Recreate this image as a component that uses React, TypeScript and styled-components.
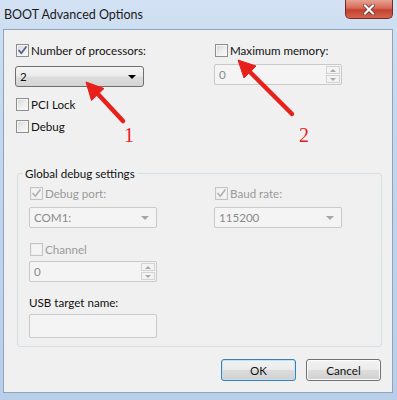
import React from "react";
import styled, { createGlobalStyle, css } from "styled-components";

const GlobalStyle = createGlobalStyle`
  html, body { margin: 0; padding: 0; }
  body { font-family: Lato, "Noto Sans", "DejaVu Sans", sans-serif; font-size: 11.6px; }
  * { box-sizing: border-box; }
`;

const Window = styled.div`
  position: relative;
  width: 397px;
  height: 400px;
  display: flex;
  flex-direction: column;
  padding: 0 4px 7px 3px;
  background: linear-gradient(180deg, #d2e1f3 0%, #c3d7ee 30%, #b9cfe9 100%);
  overflow: hidden;
`;

const TitleBar = styled.div`
  height: 29px;
  display: flex;
  align-items: flex-start;
  justify-content: space-between;
  flex: none;
`;

const Title = styled.div`
  margin-top: 6px;
  margin-left: 1px;
  font-size: 12.5px;
  line-height: 17px;
  color: #1b1b1b;
`;

const CloseButton = styled.div`
  width: 48px;
  height: 19px;
  border: 1px solid #7a2a24;
  border-top: none;
  border-radius: 0 0 5px 5px;
  background: linear-gradient(180deg, #e7a291 0%, #d76a59 45%, #c5402f 55%, #d2644f 100%);
  display: flex;
  align-items: center;
  justify-content: center;
`;

const Client = styled.div`
  flex: 1;
  background: #f0f0f0;
  border: 1px solid #8ea3bd;
  padding: 13px 11px 0 11px;
  display: flex;
  flex-direction: column;
`;

const TopGrid = styled.div`
  display: grid;
  grid-template-columns: 199px 1fr;
`;

const Column = styled.div`
  display: flex;
  flex-direction: column;
  align-items: flex-start;
`;

const Row = styled.label<{ $mt?: number; $disabled?: boolean }>`
  display: flex;
  align-items: center;
  gap: 2px;
  height: 15px;
  margin-top: ${(p) => p.$mt ?? 0}px;
  margin-left: 1px;
  line-height: 15px;
  color: ${(p) => (p.$disabled ? "#9a9a9a" : "#111")};
  white-space: nowrap;
`;

const Box = styled.span<{ $disabled?: boolean }>`
  width: 13px;
  height: 13px;
  flex: none;
  border: 1px solid ${(p) => (p.$disabled ? "#c4c4c4" : "#8e8f8f")};
  background: ${(p) =>
    p.$disabled
      ? "#f4f4f4"
      : "linear-gradient(135deg, #d6d6d6 0%, #ececec 50%, #fbfbfb 100%)"};
  box-shadow: inset 0 0 0 1px ${(p) => (p.$disabled ? "#ededed" : "#f4f4f4")};
  display: flex;
  align-items: center;
  justify-content: center;
`;

const Field = styled.div<{ $mt?: number; $w: number; $h?: number; $variant: "combo" | "disabled" }>`
  width: ${(p) => p.$w}px;
  height: ${(p) => p.$h ?? 21}px;
  margin-top: ${(p) => p.$mt ?? 0}px;
  display: flex;
  align-items: center;
  justify-content: space-between;
  padding-left: 4px;
  ${(p) =>
    p.$variant === "combo"
      ? css`
          border: 1px solid #707070;
          border-radius: 3px;
          background: linear-gradient(180deg, #f4f4f4 0%, #ebebeb 48%, #dddddd 52%, #d4d4d4 100%);
          color: #111;
        `
      : css`
          border: 1px solid #c9c9c9;
          border-radius: 2px;
          background: #f4f4f4;
          color: #8a8a8a;
        `}
`;

const DropArrow = styled.span<{ $disabled?: boolean }>`
  width: 0;
  height: 0;
  margin-right: 7px;
  border-left: 4px solid transparent;
  border-right: 4px solid transparent;
  border-top: 4px solid ${(p) => (p.$disabled ? "#a5a5a5" : "#000")};
`;

const Spinner = styled.div`
  display: flex;
  flex-direction: column;
  gap: 1px;
  margin-right: 1px;
  height: 17px;
`;

const SpinBtn = styled.div<{ $up?: boolean }>`
  width: 14px;
  height: 8px;
  border: 1px solid #d3d3d3;
  background: #f3f3f3;
  display: flex;
  align-items: center;
  justify-content: center;
  &::after {
    content: "";
    border-left: 3px solid transparent;
    border-right: 3px solid transparent;
    ${(p) =>
      p.$up ? "border-bottom: 3px solid #a9a9a9;" : "border-top: 3px solid #a9a9a9;"}
  }
`;

const Group = styled.fieldset`
  width: 365px;
  margin: 32px 0 0 2px;
  padding: 0 0 8px 0;
  border: 1px solid #d5dfe5;
  border-radius: 3px;
  min-width: 0;
`;

const Legend = styled.legend`
  margin-left: 5px;
  padding: 0 2px;
  line-height: 15px;
  color: #111;
`;

const GroupGrid = styled.div`
  display: grid;
  grid-template-columns: 185px 1fr;
  padding: 5px 0 0 11px;
`;

const Label = styled.div<{ $mt?: number }>`
  margin-top: ${(p) => p.$mt ?? 0}px;
  line-height: 15px;
  color: #111;
`;

const ButtonRow = styled.div`
  display: flex;
  justify-content: flex-end;
  gap: 10px;
  margin-top: 12px;
  width: 366px;
`;

const Button = styled.div<{ $default?: boolean }>`
  width: 75px;
  height: 22px;
  border-radius: 3px;
  display: flex;
  align-items: center;
  justify-content: center;
  color: #111;
  background: linear-gradient(180deg, #f2f2f2 0%, #ebebeb 48%, #dddddd 52%, #cfcfcf 100%);
  border: 1px solid ${(p) => (p.$default ? "#3c7fb1" : "#707070")};
  box-shadow: ${(p) => (p.$default ? "inset 0 0 0 1px #bde4f7" : "inset 0 0 0 1px #fbfbfb")};
`;

const Overlay = styled.svg`
  position: absolute;
  left: 0;
  top: 0;
  pointer-events: none;
`;

const Check = ({ disabled }: { disabled?: boolean }) => (
  <svg width="11" height="11" viewBox="0 0 11 11">
    <path
      d="M2 5.5 L4.3 8.3 L9 2"
      fill="none"
      stroke={disabled ? "#b3b3b3" : "#4a5f93"}
      strokeWidth="1.7"
      strokeLinecap="round"
      strokeLinejoin="round"
    />
  </svg>
);

const CheckBox = ({ checked, disabled }: { checked?: boolean; disabled?: boolean }) => (
  <Box $disabled={disabled}>{checked && <Check disabled={disabled} />}</Box>
);

const SpinField = ({ w, value, mt }: { w: number; value: string; mt?: number }) => (
  <Field $w={w} $mt={mt} $variant="disabled">
    <span>{value}</span>
    <Spinner>
      <SpinBtn $up />
      <SpinBtn />
    </Spinner>
  </Field>
);

export default function App() {
  return (
    <Window>
      <GlobalStyle />
      <TitleBar>
        <Title>BOOT Advanced Options</Title>
        <CloseButton>
          <svg width="12" height="11" viewBox="0 0 12 11">
            <path d="M2 1.5 L10 9.5 M10 1.5 L2 9.5" stroke="#5a2a25" strokeWidth="3.6" strokeLinecap="square" />
            <path d="M2 1.5 L10 9.5 M10 1.5 L2 9.5" stroke="#ffffff" strokeWidth="2.2" strokeLinecap="square" />
          </svg>
        </CloseButton>
      </TitleBar>
      <Client>
        <TopGrid>
          <Column>
            <Row>
              <CheckBox checked />
              Number of processors:
            </Row>
            <Field $w={129} $mt={8} $variant="combo">
              <span>2</span>
              <DropArrow />
            </Field>
            <Row $mt={10}>
              <CheckBox />
              PCI Lock
            </Row>
            <Row $mt={7}>
              <CheckBox />
              Debug
            </Row>
          </Column>
          <Column>
            <Row>
              <CheckBox />
              Maximum memory:
            </Row>
            <SpinField w={128} value="0" mt={6} />
          </Column>
        </TopGrid>

        <Group>
          <Legend>Global debug settings</Legend>
          <GroupGrid>
            <Column>
              <Row $disabled>
                <CheckBox checked disabled />
                Debug port:
              </Row>
              <Field $w={128} $mt={6} $variant="disabled">
                <span>COM1:</span>
                <DropArrow $disabled />
              </Field>
              <Row $mt={14} $disabled>
                <CheckBox disabled />
                Channel
              </Row>
              <SpinField w={128} value="0" mt={4} />
              <Label $mt={13}>USB target name:</Label>
              <Field $w={128} $h={24} $mt={4} $variant="disabled" />
            </Column>
            <Column>
              <Row $disabled>
                <CheckBox checked disabled />
                Baud rate:
              </Row>
              <Field $w={128} $mt={6} $variant="disabled">
                <span>115200</span>
                <DropArrow $disabled />
              </Field>
            </Column>
          </GroupGrid>
        </Group>

        <ButtonRow>
          <Button $default>OK</Button>
          <Button>Cancel</Button>
        </ButtonRow>
      </Client>

      <Overlay width="397" height="400" viewBox="0 0 397 400">
        <g fill="#e8201c" stroke="#e8201c">
          <line x1="123" y1="121" x2="97" y2="93" strokeWidth="4.5" strokeLinecap="round" />
          <polygon points="86,82 104,88.5 91.5,100.5" strokeWidth="1" strokeLinejoin="round" />
          <line x1="292" y1="114" x2="250" y2="72" strokeWidth="4.5" strokeLinecap="round" />
          <polygon points="238,60 256,66 244,78" strokeWidth="1" strokeLinejoin="round" />
        </g>
        <text x="124" y="142" fill="#e8201c" fontFamily="'Liberation Serif', serif" fontSize="20">1</text>
        <text x="299" y="142" fill="#e8201c" fontFamily="'Liberation Serif', serif" fontSize="20">2</text>
      </Overlay>
    </Window>
  );
}
